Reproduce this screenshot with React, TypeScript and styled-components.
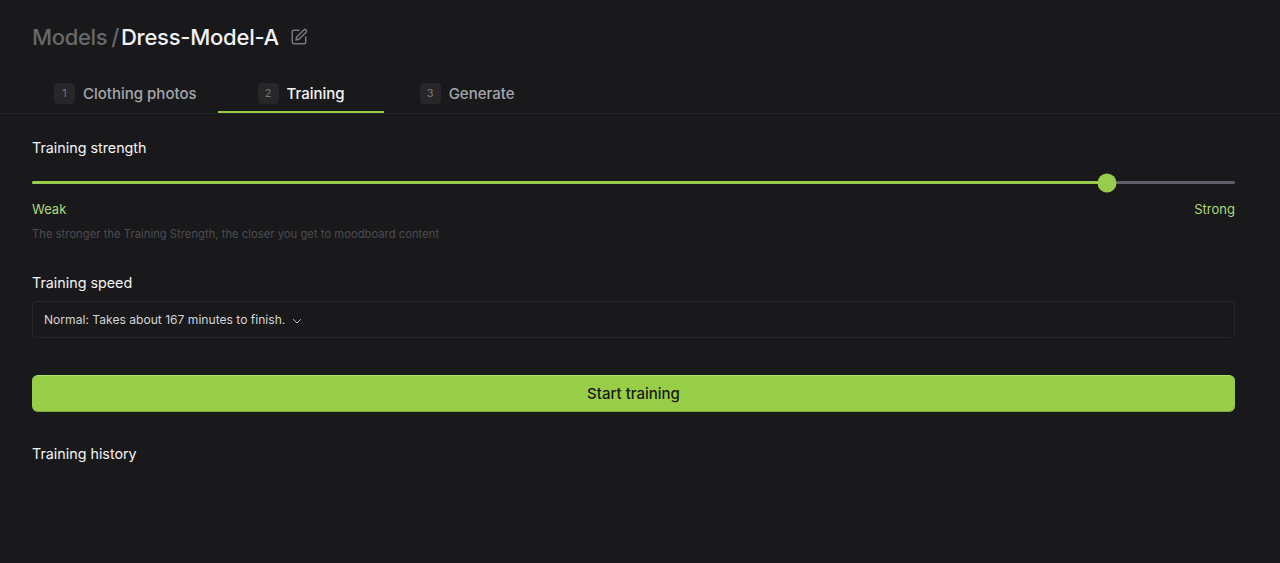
import React from "react";
import styled, { createGlobalStyle } from "styled-components";

const Global = createGlobalStyle`
  html, body { margin: 0; padding: 0; background: #19191b; }
  body { font-family: Inter, "Liberation Sans", sans-serif; }
`;

const Page = styled.div`
  width: 1280px;
  height: 563px;
  overflow: hidden;
  background: #19191b;
  display: flex;
  flex-direction: column;
  color: #fff;
`;

const Header = styled.header`
  display: flex;
  align-items: center;
  height: 28px;
  padding: 23px 0 0 32px;
`;

const Crumb = styled.span`
  font-size: 22px;
  font-weight: 500;
  line-height: 28px;
  letter-spacing: -0.35px;
  color: #68686c;
`;

const Slash = styled(Crumb)`
  margin: 0 2px 0 4px;
`;

const Title = styled.h1`
  margin: 0;
  font-size: 22px;
  font-weight: 500;
  line-height: 28px;
  letter-spacing: -0.25px;
  color: #f2f2f3;
`;

const EditIcon = styled.svg`
  margin-left: 11px;
  width: 18px;
  height: 18px;
  color: #77777b;
`;

const Tabs = styled.nav`
  display: flex;
  height: 42px;
  margin-top: 20px;
  padding-left: 32px;
  border-bottom: 1px solid #26262a;
`;

const Tab = styled.div<{ $left: number; $right: number; $active?: boolean }>`
  display: flex;
  align-items: center;
  gap: 8px;
  height: 42px;
  padding: 4px ${(p) => p.$right}px 0 ${(p) => p.$left}px;
  box-sizing: border-box;
  font-size: 15px;
  font-weight: 500;
  color: ${(p) => (p.$active ? "#f4f4f5" : "#a6a6aa")};
  border-bottom: 2px solid ${(p) => (p.$active ? "#94cb45" : "transparent")};
`;

const Badge = styled.span`
  width: 21px;
  height: 21px;
  border-radius: 4px;
  background: #27272a;
  color: #77777b;
  font-size: 11px;
  font-weight: 400;
  display: flex;
  align-items: center;
  justify-content: center;
`;

const Content = styled.main`
  width: 1203px;
  margin-left: 32px;
  display: flex;
  flex-direction: column;
`;

const Label = styled.div`
  font-size: 14.3px;
  font-weight: 400;
  line-height: 20px;
  color: #f4f4f5;
`;

const StrengthLabel = styled(Label)`
  margin-top: 24px;
`;

const Track = styled.div`
  position: relative;
  height: 3px;
  margin-top: 23px;
  border-radius: 2px;
  background: #605f68;
`;

const Fill = styled.div`
  height: 100%;
  border-radius: 2px 0 0 2px;
  background: #98cc4c;
`;

const Thumb = styled.div`
  position: absolute;
  top: 50%;
  width: 19px;
  height: 19px;
  border-radius: 50%;
  background: #98cc4c;
  transform: translate(-50%, -50%);
`;

const Scale = styled.div`
  display: flex;
  justify-content: space-between;
  margin-top: 16px;
  font-size: 13px;
  line-height: 18px;
  color: #aed87a;
`;

const Hint = styled.p`
  margin: 8px 0 0;
  font-size: 11.2px;
  line-height: 16px;
  letter-spacing: 0.04px;
  color: #4c4c50;
`;

const SpeedLabel = styled(Label)`
  margin-top: 31px;
`;

const Select = styled.div`
  display: flex;
  align-items: center;
  gap: 6px;
  box-sizing: border-box;
  height: 37px;
  margin-top: 8px;
  padding: 0 11px;
  border: 1px solid #27272a;
  border-radius: 4px;
  font-size: 12.1px;
  color: #d4d4d6;
`;

const Chevron = styled.svg`
  width: 12px;
  height: 12px;
  color: #c4c4c7;
  margin-top: 2px;
`;

const StartButton = styled.button`
  display: block;
  width: 100%;
  height: 37px;
  margin-top: 37px;
  padding: 0;
  border: 0;
  border-top: 1px solid #b4e070;
  border-bottom: 1px solid #7ba83a;
  border-radius: 6px;
  background: #98ce47;
  font-family: inherit;
  font-size: 15px;
  font-weight: 500;
  color: #17190f;
`;

const HistoryLabel = styled(Label)`
  margin-top: 32px;
`;

export default function App() {
  return (
    <Page>
      <Global />
      <Header>
        <Crumb>Models</Crumb>
        <Slash>/</Slash>
        <Title>Dress-Model-A</Title>
        <EditIcon viewBox="0 0 24 24" fill="none" stroke="currentColor" strokeWidth="2" strokeLinecap="round" strokeLinejoin="round">
          <path d="M12 3H5a2 2 0 0 0-2 2v14a2 2 0 0 0 2 2h14a2 2 0 0 0 2-2v-7" />
          <path d="M18.4 2.6a2.1 2.1 0 1 1 3 3L12 15l-4 1 1-4Z" />
        </EditIcon>
      </Header>
      <Tabs>
        <Tab $left={22} $right={21}>
          <Badge>1</Badge>
          Clothing photos
        </Tab>
        <Tab $left={40} $right={39} $active>
          <Badge>2</Badge>
          Training
        </Tab>
        <Tab $left={36} $right={22}>
          <Badge>3</Badge>
          Generate
        </Tab>
      </Tabs>
      <Content>
        <StrengthLabel>Training strength</StrengthLabel>
        <Track>
          <Fill style={{ width: "89.4%" }} />
          <Thumb style={{ left: "89.4%" }} />
        </Track>
        <Scale>
          <span>Weak</span>
          <span>Strong</span>
        </Scale>
        <Hint>The stronger the Training Strength, the closer you get to moodboard content</Hint>
        <SpeedLabel>Training speed</SpeedLabel>
        <Select>
          Normal: Takes about 167 minutes to finish.
          <Chevron viewBox="0 0 24 24" fill="none" stroke="currentColor" strokeWidth="2" strokeLinecap="round" strokeLinejoin="round">
            <path d="m5 9 7 7 7-7" />
          </Chevron>
        </Select>
        <StartButton>Start training</StartButton>
        <HistoryLabel>Training history</HistoryLabel>
      </Content>
    </Page>
  );
}
